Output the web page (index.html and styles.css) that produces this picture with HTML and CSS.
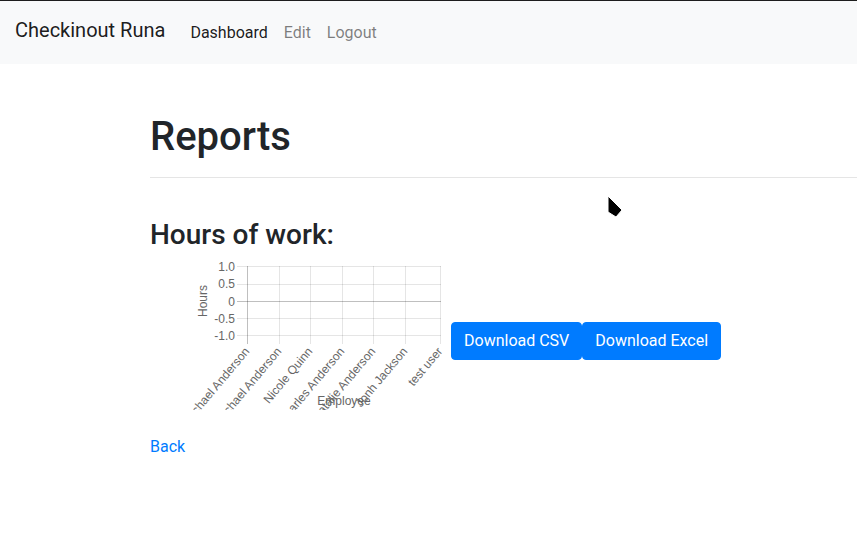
FILE: index.html
```html
<!DOCTYPE html>
<html lang="en">
<head>
<meta charset="utf-8">
<title>Reports - Checkinout Runa</title>
<link rel="stylesheet" href="styles.css">
</head>
<body>
<nav class="navbar">
  <a class="brand" href="#">Checkinout Runa</a>
  <ul class="nav">
    <li><a class="nav-link active" href="#">Dashboard</a></li>
    <li><a class="nav-link" href="#">Edit</a></li>
    <li><a class="nav-link" href="#">Logout</a></li>
  </ul>
</nav>
<main class="main">
  <h1 class="title">Reports</h1>
  <hr class="rule">
  <h3 class="subtitle">Hours of work:</h3>
  <div class="report-row">
    <svg class="chart" width="266" height="150" viewBox="35 0 266 150" xmlns="http://www.w3.org/2000/svg">
      <g class="grid">
        <line x1="87" y1="6.5" x2="291" y2="6.5"/>
        <line x1="87" y1="24.5" x2="291" y2="24.5"/>
        <line x1="87" y1="58.5" x2="291" y2="58.5"/>
        <line x1="87" y1="75.5" x2="291" y2="75.5"/>
        <line x1="129.5" y1="6" x2="129.5" y2="84"/>
        <line x1="160.5" y1="6" x2="160.5" y2="84"/>
        <line x1="192.5" y1="6" x2="192.5" y2="84"/>
        <line x1="223.5" y1="6" x2="223.5" y2="84"/>
        <line x1="255.5" y1="6" x2="255.5" y2="84"/>
        <line x1="290.5" y1="6" x2="290.5" y2="84"/>
      </g>
      <g class="axis">
        <line x1="87" y1="41.5" x2="291" y2="41.5"/>
        <line x1="97.5" y1="6" x2="97.5" y2="84"/>
      </g>
      <g class="ticks" text-anchor="end" dominant-baseline="central">
        <text x="85" y="6.5">1.0</text>
        <text x="85" y="24">0.5</text>
        <text x="85" y="41.5">0</text>
        <text x="85" y="58.5">-0.5</text>
        <text x="85" y="75.5">-1.0</text>
      </g>
      <text class="ticks" x="0" y="0" text-anchor="middle" dominant-baseline="central" transform="translate(53 41) rotate(-90)">Hours</text>
      <g class="ticks" text-anchor="end" dominant-baseline="central">
        <text transform="translate(97 89) rotate(-50)">Michael Anderson</text>
        <text transform="translate(129 89) rotate(-50)">Michael Anderson</text>
        <text transform="translate(160 89) rotate(-50)">Nicole Quinn</text>
        <text transform="translate(192 89) rotate(-50)">Charles Anderson</text>
        <text transform="translate(223 89) rotate(-50)">Natalie Anderson</text>
        <text transform="translate(255 89) rotate(-50)">Jonh Jackson</text>
        <text transform="translate(290 89) rotate(-50)">test user</text>
      </g>
      <text class="ticks" x="194" y="145" text-anchor="middle">Employee</text>
    </svg>
    <div class="buttons">
      <a class="btn" href="#">Download CSV</a>
      <a class="btn" href="#">Download Excel</a>
    </div>
  </div>
  <a class="back" href="#">Back</a>
</main>
<svg class="cursor" width="18" height="24" viewBox="0 0 18 24" xmlns="http://www.w3.org/2000/svg">
  <polygon points="1,1 1,17 9,22 15,15" fill="#000" stroke="#fff" stroke-width="1" stroke-linejoin="round"/>
</svg>
</body>
</html>
```

FILE: styles.css
```css
* { box-sizing: border-box; }

html, body {
  margin: 0;
  padding: 0;
  background: #fff;
}

body {
  font-family: Roboto, "Liberation Sans", sans-serif;
  font-size: 16px;
  line-height: 1.5;
  color: #212529;
  border-top: 1px solid #1d1d1d;
  overflow: hidden;
}

a { text-decoration: none; }

.navbar {
  display: flex;
  align-items: center;
  height: 63px;
  padding: 0 15px;
  background: #f8f9fa;
}

.brand {
  font-size: 20px;
  line-height: 30px;
  color: rgba(0, 0, 0, 0.9);
  margin-right: 17px;
  margin-top: -6px;
}

.nav {
  display: flex;
  list-style: none;
  margin: 0;
  padding: 0;
}

.nav-link {
  display: block;
  padding: 8px 8px;
  color: rgba(0, 0, 0, 0.5);
  margin-top: 1px;
}

.nav-link.active {
  color: rgba(0, 0, 0, 0.9);
}

.main {
  padding: 49px 0 0 150px;
}

.title {
  font-size: 40px;
  font-weight: 500;
  line-height: 1.2;
  margin: 0;
}

.rule {
  margin: 16px 0 40px;
  border: 0;
  border-top: 1px solid rgba(0, 0, 0, 0.1);
  width: 720px;
}

.subtitle {
  font-size: 28px;
  font-weight: 500;
  line-height: 1.2;
  margin: 0 0 8px;
}

.report-row {
  display: flex;
  align-items: flex-start;
}

.chart {
  display: block;
  margin-left: 35px;
}

.grid line {
  stroke: rgba(0, 0, 0, 0.1);
  stroke-width: 1;
}

.axis line {
  stroke: rgba(0, 0, 0, 0.25);
  stroke-width: 1;
}

.ticks {
  font-family: "Liberation Sans", Arial, sans-serif;
  font-size: 12px;
  fill: #666;
}

.buttons {
  display: flex;
  margin-top: 62px;
}

.btn {
  display: inline-block;
  padding: 6px 12px;
  font-size: 16px;
  line-height: 24px;
  color: #fff;
  background: #007bff;
  border: 1px solid #007bff;
  border-radius: 4px;
}

.back {
  display: inline-block;
  margin-top: 25px;
  color: #007bff;
}

.cursor {
  position: absolute;
  left: 607px;
  top: 195px;
}
```
